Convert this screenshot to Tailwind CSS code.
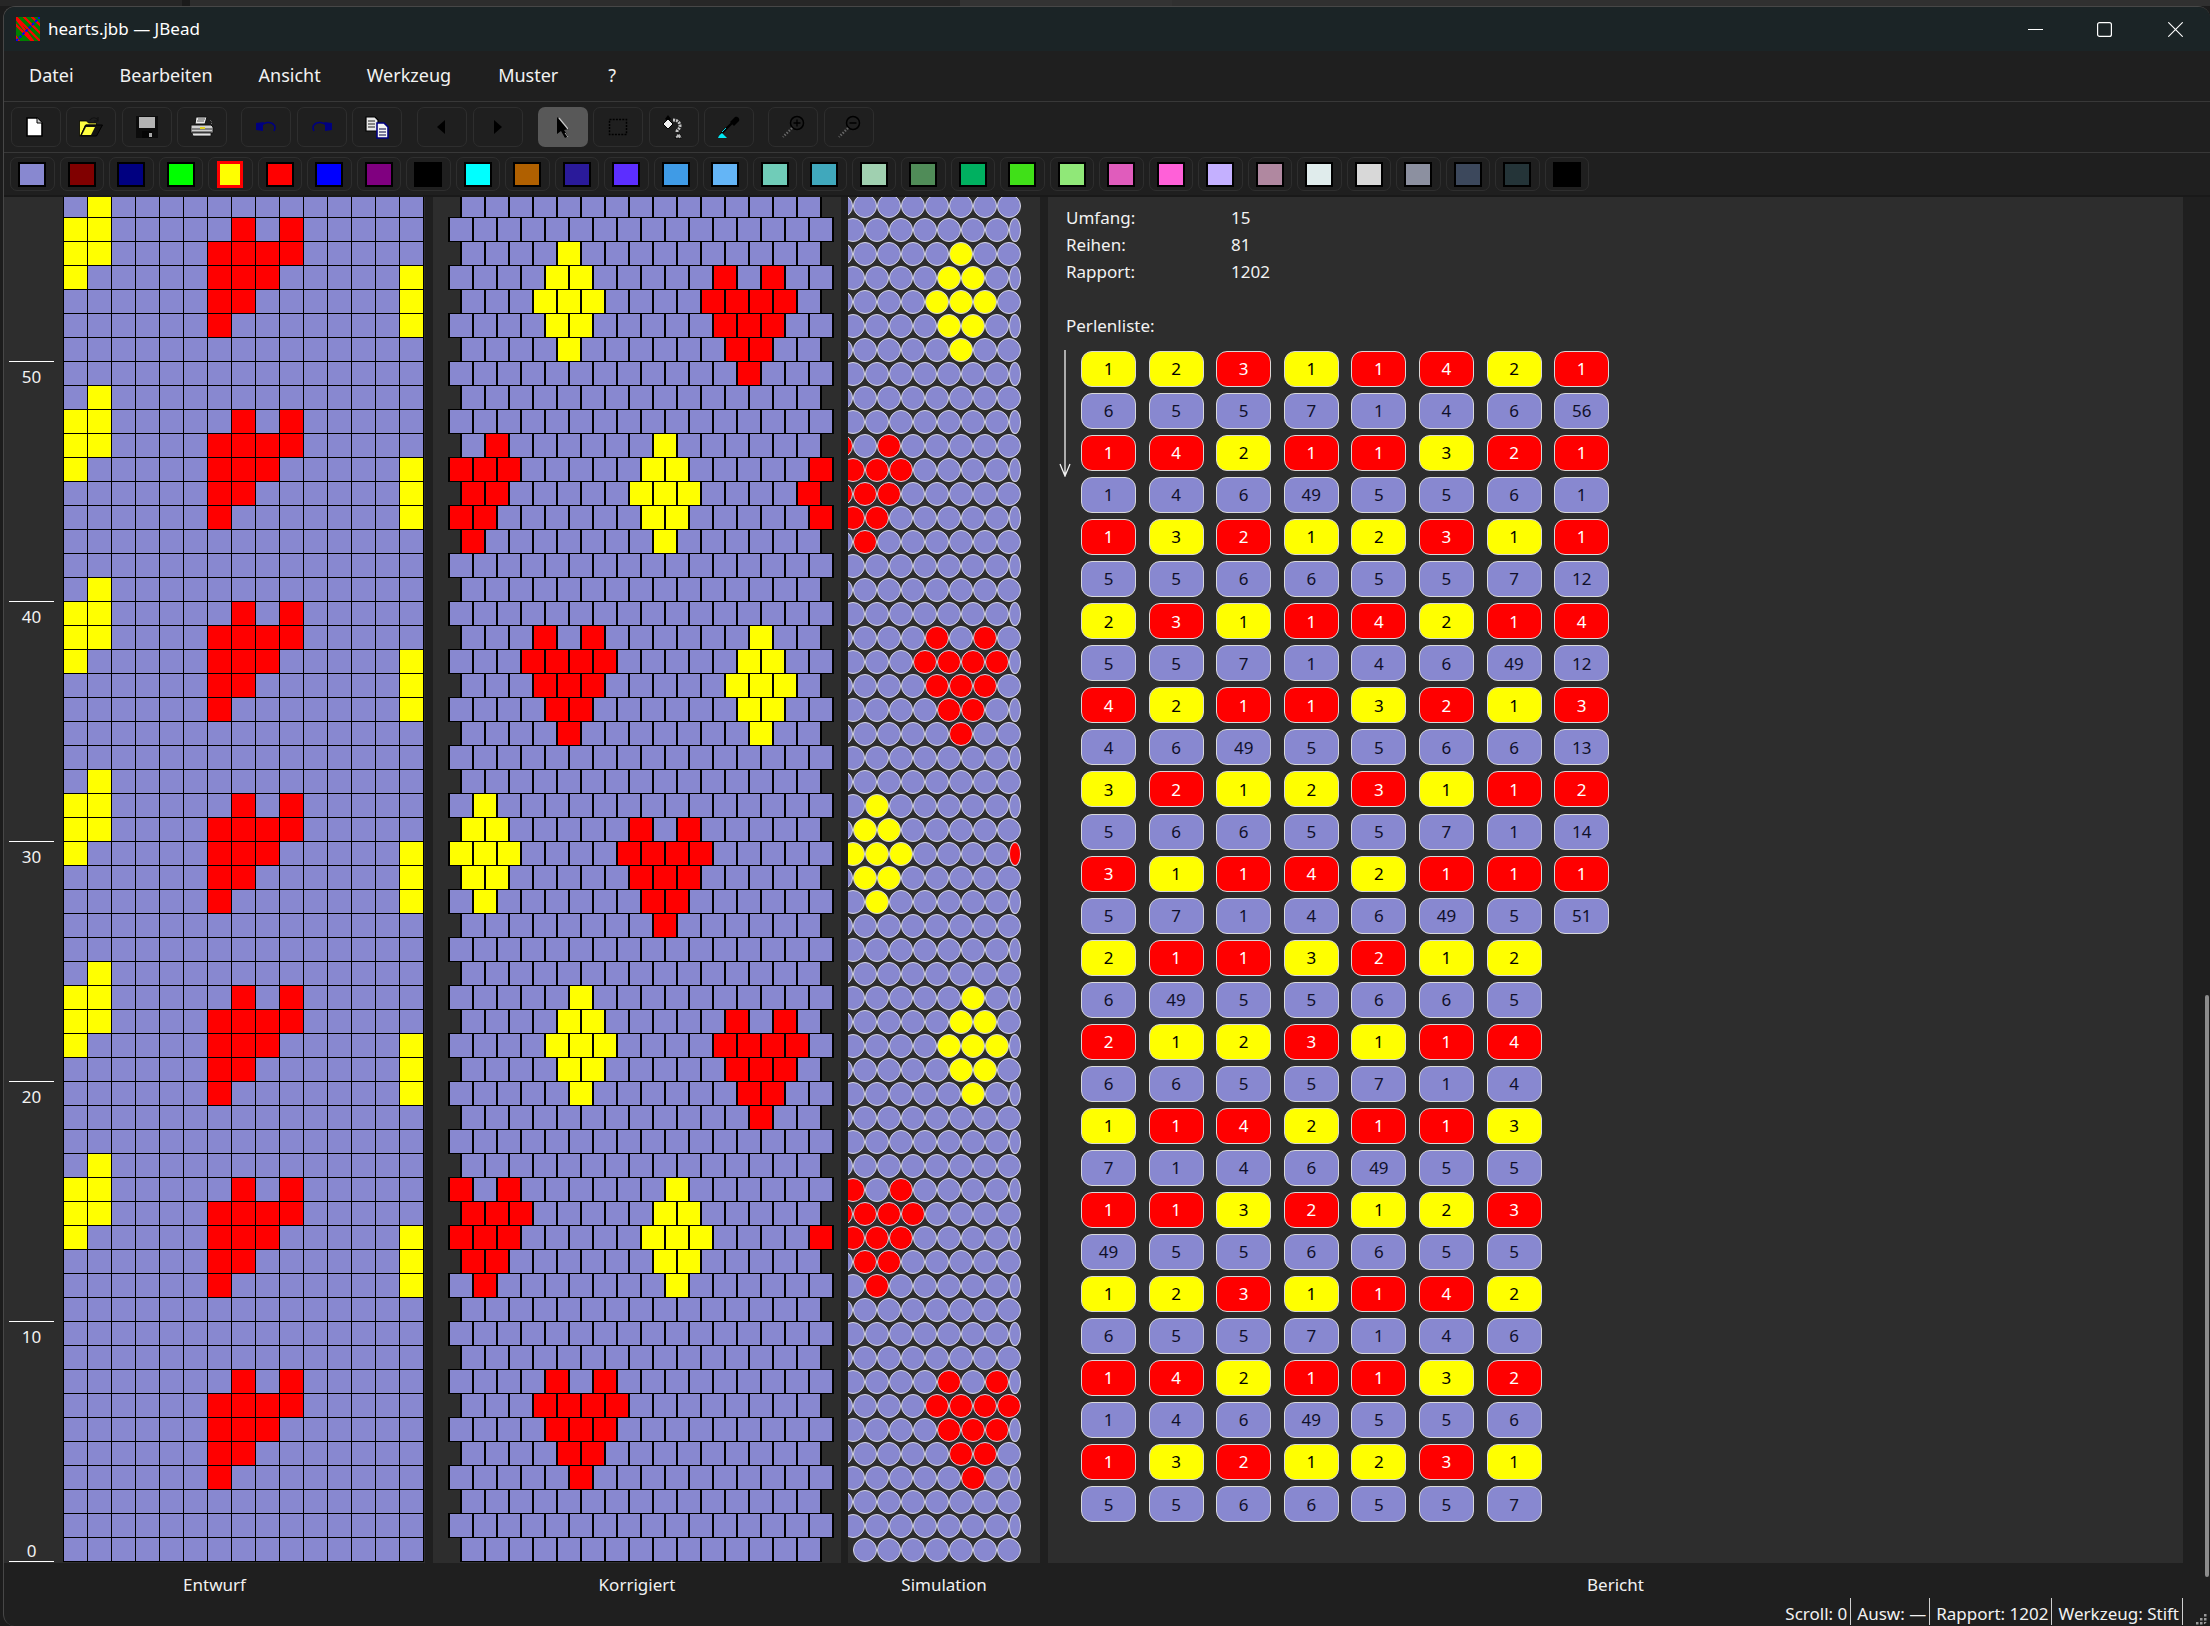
<!DOCTYPE html>
<html lang="de">
<head>
  <meta charset="UTF-8" />
  <title>hearts.jbb — JBead</title>
  <script src="https://cdn.jsdelivr.net/npm/@tailwindcss/browser@4"></script>
</head>
<body class="bg-[#1c1c1c] text-[#f2f2f2] font-['Noto_Sans','Open_Sans',sans-serif] text-[17px] overflow-hidden">
<div class="relative w-[2210px] h-[1626px] flex flex-col overflow-hidden">

  <!-- desktop behind the window -->
  <div class="flex h-[6px] shrink-0">
    <div class="w-[182px] bg-[#262626]"></div>
    <div class="w-[8px] bg-[#1b1b1b]"></div>
    <div class="w-[480px] bg-[#2d2d2d]"></div>
    <div class="w-[290px] bg-[#272727]"></div>
    <div class="w-[212px] bg-[#333333]"></div>
    <div class="flex-1 bg-[#303030]"></div>
  </div>

  <div class="flex-1 flex flex-col ml-[3px] bg-[#1f1f1f] rounded-[12px] border-t border-l border-[#474747] overflow-hidden">

    <!-- Titelleiste -->
    <div class="h-[44px] shrink-0 flex items-center bg-[#1b2426]">
      <svg class="ml-[12px] w-6 h-6" viewBox="0 0 24 24">
        <rect width="24" height="24" fill="#008000"/>
        <path d="M-8 8L8 32M0 0L24 24M8 -8L32 16M-4 -4L20 28M4 -4L28 20M-4 4L20 28" stroke="#ff0000" stroke-width="2.2" fill="none"/>
        <path d="M0 24L24 0" stroke="#0000ff" stroke-width="2" stroke-dasharray="3 1.5"/>
      </svg>
      <span class="ml-[8px] text-white">hearts.jbb — JBead</span>
      <div class="ml-auto flex items-center">
        <svg class="w-[15px] h-[15px] mr-[54px]" viewBox="0 0 15 15"><path d="M0 7.5H15" stroke="#fff" stroke-width="1"/></svg>
        <svg class="w-[15px] h-[15px] mr-[56px]" viewBox="0 0 15 15"><rect x="0.6" y="0.6" width="13.8" height="13.8" rx="2" fill="none" stroke="#fff" stroke-width="1.2"/></svg>
        <svg class="w-[15px] h-[15px] mr-[27px]" viewBox="0 0 15 15"><path d="M0.3 0.3L14.7 14.7M14.7 0.3L0.3 14.7" stroke="#fff" stroke-width="1.1"/></svg>
      </div>
    </div>

    <!-- Menue -->
    <div class="h-[51px] shrink-0 flex items-center pl-[25px] pb-[2px] gap-[46px] border-b border-[#383838] text-[18px]">
      <span>Datei</span><span>Bearbeiten</span><span>Ansicht</span><span>Werkzeug</span><span class="ml-px">Muster</span><span class="ml-[4px]">?</span>
    </div>

    <!-- Werkzeugleiste -->
    <div class="h-[51px] shrink-0 flex items-center pl-[6.5px] border-b border-[#383838]">
      <div class="flex gap-[5.5px]">
        <button class="w-[50px] h-10 rounded-[7px] border border-[#2e2e2e] flex items-center justify-center">
          <svg class="w-6 h-6 -ml-[2px]" viewBox="0 0 24 24"><path d="M4 3h10l5 5v13H4z" fill="#fff" stroke="#000" stroke-width="1.6"/><path d="M14 3v5h5" fill="#ccc" stroke="#000" stroke-width="1"/></svg>
        </button>
        <button class="w-[50px] h-10 rounded-[7px] border border-[#2e2e2e] flex items-center justify-center">
          <svg class="w-6 h-6" viewBox="0 0 24 24"><path d="M0.5 6h7l2 2h8v2H7L1.5 21h-1z" fill="#ffff40" stroke="#000" stroke-width="0.8"/><path d="M1.5 21l5-11h17l-6 11z" fill="#121212" stroke="#000"/><path d="M3 20l4-8h9l-4 8z" fill="#ffff40"/><path d="M11 5c2-3 6-3 8 0M19 2v4h-4" fill="none" stroke="#111" stroke-width="1.2"/></svg>
        </button>
        <button class="w-[50px] h-10 rounded-[7px] border border-[#2e2e2e] flex items-center justify-center">
          <svg class="w-6 h-6" viewBox="0 0 24 24"><rect x="1" y="1" width="22" height="22" fill="#0c0c0c"/><rect x="4" y="2" width="16" height="11" fill="#b4b4b4"/><rect x="7" y="16" width="10" height="7" fill="#050505"/><rect x="14" y="18" width="3" height="4" fill="#a8a8a8"/></svg>
        </button>
        <button class="w-[50px] h-10 rounded-[7px] border border-[#2e2e2e] flex items-center justify-center">
          <svg class="w-6 h-6" viewBox="0 0 24 24"><path d="M6 2h11l-2 7H5z" fill="#e8e8e8" stroke="#111"/><path d="M8 4h7M7 6h7" stroke="#333" stroke-width="0.8"/><path d="M1 10h20l2 2v6H1z" fill="#d0d0d0" stroke="#111"/><path d="M2 14h20M2 17h20" stroke="#333" stroke-width="1"/><rect x="10" y="12" width="5" height="2" fill="#e0d020"/><path d="M20 5l2 2-1 3" stroke="#777" stroke-dasharray="1 1" fill="none"/><path d="M2 18h19v3H3z" fill="#e4e4e4" stroke="#111" stroke-width="0.8"/></svg>
        </button>
      </div>
      <div class="flex gap-[5.5px] ml-[14px]">
        <button class="w-[50px] h-10 rounded-[7px] border border-[#2e2e2e] flex items-center justify-center">
          <svg class="w-6 h-6" viewBox="0 0 24 24"><path d="M2 8l8 -1-1 2 0 7-7-1z" fill="#000080"/><path d="M7 11c3-4 10-5 13-1 2 2 1 4 0 6" fill="none" stroke="#000080" stroke-width="1.6"/></svg>
        </button>
        <button class="w-[50px] h-10 rounded-[7px] border border-[#2e2e2e] flex items-center justify-center">
          <svg class="w-6 h-6" viewBox="0 0 24 24"><path d="M22 8l-8 -1 1 2 0 7 7-1z" fill="#000080"/><path d="M17 11c-3-4-10-5-13-1-2 2-1 4 0 6" fill="none" stroke="#000080" stroke-width="1.6"/></svg>
        </button>
        <button class="w-[50px] h-10 rounded-[7px] border border-[#2e2e2e] flex items-center justify-center">
          <svg class="w-6 h-6" viewBox="0 0 24 24"><path d="M1 2h9l3 3v11H1z" fill="#e8e8e8" stroke="#000" stroke-width="1.2"/><path d="M3 6h7M3 9h7M3 12h7" stroke="#222" stroke-width="1.1"/><path d="M12 8h7l4 4v11H12z" fill="#f4f4f4" stroke="#000080" stroke-width="1.6"/><path d="M14 14h7M14 17h7M14 20h7" stroke="#000040" stroke-width="1.1"/></svg>
        </button>
      </div>
      <div class="flex gap-[5.5px] ml-[15px]">
        <button class="w-[50px] h-10 rounded-[7px] border border-[#2e2e2e] flex items-center justify-center">
          <svg class="w-6 h-6 -ml-[2px]" viewBox="0 0 24 24"><path d="M16 5v14L8 12z" fill="#000"/></svg>
        </button>
        <button class="w-[50px] h-10 rounded-[7px] border border-[#2e2e2e] flex items-center justify-center">
          <svg class="w-6 h-6" viewBox="0 0 24 24"><path d="M8 5v14l8-7z" fill="#000"/></svg>
        </button>
      </div>
      <div class="flex gap-[5.5px] ml-[15px]">
        <button class="w-[50px] h-10 rounded-[7px] bg-[#585858] flex items-center justify-center">
          <svg class="w-6 h-6" viewBox="0 0 24 24"><path d="M6 2l0 17 4-3 4 7 3-2-4-6 5-1z" fill="#000"/><path d="M8 3l9 11" stroke="#c8c8c8" stroke-width="1.2"/><path d="M14 18l3 4" stroke="#aaa" stroke-width="1"/></svg>
        </button>
        <button class="w-[50px] h-10 rounded-[7px] border border-[#2e2e2e] flex items-center justify-center">
          <svg class="w-6 h-6" viewBox="0 0 24 24"><rect x="3.5" y="4.5" width="17" height="15" fill="none" stroke="#000" stroke-width="1.5" stroke-dasharray="2 1.2"/></svg>
        </button>
        <button class="w-[50px] h-10 rounded-[7px] border border-[#2e2e2e] flex items-center justify-center">
          <svg class="w-6 h-6" viewBox="0 0 24 24"><path d="M6 0l3 4-3 2-3-2z" fill="#000"/><path d="M1 9l5-5 5 5-5 5z" fill="#f0f0f0" stroke="#000" stroke-width="1"/><path d="M11 5c5 0 7 3 7 6s-3 3-3 6" fill="none" stroke="#c4c4c4" stroke-width="3" stroke-dasharray="2 1"/><path d="M13 23l2-4h3l2 4z" fill="#bdbdbd" stroke="#000" stroke-dasharray="1.5 1"/></svg>
        </button>
        <button class="w-[50px] h-10 rounded-[7px] border border-[#2e2e2e] flex items-center justify-center">
          <svg class="w-6 h-6" viewBox="0 0 24 24"><path d="M15 8L5 18l-1 3" stroke="#000" stroke-width="2.4" fill="none"/><path d="M13 7l4 4 5-5c1-2-1-5-4-4z" fill="#000"/><path d="M5 17l4-4" stroke="#00d8e8" stroke-width="1"/><path d="M1 23c1-3 3-4 4-5l3 3 2 2z" fill="#00e8f4"/></svg>
        </button>
      </div>
      <div class="flex gap-[5.5px] ml-[14px]">
        <button class="w-[50px] h-10 rounded-[7px] border border-[#2e2e2e] flex items-center justify-center">
          <svg class="w-6 h-6" viewBox="0 0 24 24"><circle cx="16" cy="8" r="6.5" fill="none" stroke="#000" stroke-width="1.5"/><path d="M12.5 8h7M16 4.5v7" stroke="#000" stroke-width="1.3"/><path d="M11 13L2 22" stroke="#666" stroke-width="2.4" stroke-dasharray="1.5 1.5"/></svg>
        </button>
        <button class="w-[50px] h-10 rounded-[7px] border border-[#2e2e2e] flex items-center justify-center">
          <svg class="w-6 h-6" viewBox="0 0 24 24"><circle cx="16" cy="8" r="6.5" fill="none" stroke="#000" stroke-width="1.5"/><path d="M12.5 8h7" stroke="#000" stroke-width="1.3"/><path d="M11 13L2 22" stroke="#666" stroke-width="2.4" stroke-dasharray="1.5 1.5"/></svg>
        </button>
      </div>
    </div>

    <!-- Farbpalette -->
    <div id="palette" class="h-[44px] shrink-0 flex items-start pt-[4px] pl-[6px] gap-[5px] border-b-2 border-[#191919]"></div>

    <!-- Ansichten -->
    <div class="h-[1366px] shrink-0 flex">
      <div id="draft" class="w-[421px] mr-[8px] flex flex-col justify-end overflow-hidden pb-px bg-[#2d2d2d]"></div>
      <div id="corrected" class="w-[408px] mr-[7px] flex flex-col justify-end overflow-hidden pb-px bg-[#2d2d2d]"></div>
      <div id="simulation" class="w-[192px] mr-[8px] flex flex-col justify-end overflow-hidden pb-px bg-[#2d2d2d]"></div>

      <!-- Bericht -->
      <div class="w-[1135px] bg-[#2d2d2d] pl-[18px] pt-[7px]">
        <div class="grid grid-cols-[165px_1fr] leading-[27px]">
          <span>Umfang:</span><span>15</span>
          <span>Reihen:</span><span>81</span>
          <span>Rapport:</span><span>1202</span>
        </div>
        <div class="mt-[27px] leading-[27px]">Perlenliste:</div>
        <div class="flex mt-[12px]">
          <svg class="w-3 h-[127px] -ml-[7px] -mt-px shrink-0" viewBox="0 0 12 127"><path d="M6 0V126M1 114l5 12 5-12" fill="none" stroke="#f2f2f2" stroke-width="1.3"/></svg>
          <div id="beads" class="ml-[10px] grid grid-cols-[repeat(8,55px)] auto-rows-[36px] gap-x-[12.6px] gap-y-[6.05px]"></div>
        </div>
      </div>
    </div>

    <!-- Beschriftung -->
    <div class="h-[35px] shrink-0 flex pt-[10px] leading-[24px]">
      <span class="w-[421px] mr-[8px] text-center">Entwurf</span>
      <span class="w-[408px] mr-[7px] text-center">Korrigiert</span>
      <span class="w-[192px] mr-[8px] text-center">Simulation</span>
      <span class="w-[1135px] text-center">Bericht</span>
    </div>

    <!-- Statusleiste -->
    <div class="h-[27px] shrink-0 flex items-stretch justify-end">
      <span class="flex items-center pt-[5px] pr-[3px] border-r border-[#d0d0d0]">Scroll: 0</span>
      <span class="flex items-center pt-[5px] pl-[6px] pr-[3px] border-r border-[#d0d0d0]">Ausw: —</span>
      <span class="flex items-center pt-[5px] pl-[6px] pr-[3px] border-r border-[#d0d0d0]">Rapport: 1202</span>
      <span class="flex items-center pt-[5px] pl-[6px] pr-[3px] border-r border-[#d0d0d0]">Werkzeug: Stift</span>
      <svg class="w-[27px] h-[27px] self-end" viewBox="0 0 27 27" fill="#9a9a9a">
        <rect x="21" y="16" width="2.5" height="2.5"/><rect x="17" y="20" width="2.5" height="2.5"/><rect x="21" y="20" width="2.5" height="2.5"/>
        <rect x="13" y="24" width="2.5" height="2.5"/><rect x="17" y="24" width="2.5" height="2.5"/><rect x="21" y="24" width="2.5" height="2.5"/>
      </svg>
    </div>
  </div>

  <!-- Scrollbalken -->
  <div class="absolute left-[2205px] top-[995px] w-[4px] h-[582px] bg-[#8c8c8c] rounded-sm"></div>
</div>

<script>
  const PAL = [
    'bg-[#8888d0]','bg-[#800000]','bg-[#000080]','bg-[#00ff00]','bg-[#ffff00]','bg-[#ff0000]','bg-[#0000ff]','bg-[#800080]',
    'bg-[#000000]','bg-[#00ffff]','bg-[#b06000]','bg-[#2a1a9a]','bg-[#5c2eff]','bg-[#3f9be6]','bg-[#64b5f6]','bg-[#70ccb8]',
    'bg-[#40a8bc]','bg-[#a0d0b0]','bg-[#508c58]','bg-[#00b060]','bg-[#40e018]','bg-[#90e878]','bg-[#e05cbc]','bg-[#ff60d8]',
    'bg-[#c4b0ff]','bg-[#b088a0]','bg-[#e0ecec]','bg-[#d8d8d8]','bg-[#8c90a0]','bg-[#3c485c]','bg-[#243438]','bg-[#000000]'
  ];
  const BG = { b: 'bg-[#8888d0]', y: 'bg-[#ffff00]', r: 'bg-[#ff0000]' };

  document.getElementById('palette').innerHTML = PAL.map((c, i) => {
    const frame = i === 4 ? 'border-[#ff0000] border-[3px] w-[26px] h-[27px]' : 'border-black border-2 w-[28px] h-[25px]';
    return `<button class="w-[44.5px] h-[34px] shrink-0 rounded-[7px] border border-[#2e2e2e] flex items-center justify-center"><span class="block ${frame} ${c}"></span></button>`;
  }).join('');

  // Entwurf: Muster wiederholt sich alle 8 Reihen
  function cell(i, j) {
    const m = i % 8;
    if (i >= 3) {
      if (m === 7 && (j === 7 || j === 9)) return 'r';
      if (m === 6 && j >= 6 && j <= 9) return 'r';
      if (m === 5 && j >= 6 && j <= 8) return 'r';
      if (m === 4 && (j === 6 || j === 7)) return 'r';
      if (m === 3 && j === 6) return 'r';
    }
    if (i >= 11 && j === 14 && m >= 3 && m <= 5) return 'y';
    if (i >= 13) {
      if (m === 0 && j === 1) return 'y';
      if ((m === 7 || m === 6) && j <= 1) return 'y';
      if (m === 5 && j === 0) return 'y';
    }
    return 'b';
  }
  const bead = idx => idx < 0 ? 'b' : cell(Math.floor(idx / 15), idx % 15);
  const start = r => r * 15 + Math.floor(r / 2);
  const ROWS = 57;

  let html = '';
  for (let i = ROWS - 1; i >= 0; i--) {
    const tick = i % 10 === 0;
    const label = i === 0 ? '0' : (i % 10 === 9 ? String(i + 1) : '');
    const pad = i === 0 ? 'pt-px' : 'pt-[3px]';
    const ruler = `<div class="w-[45px] h-6 text-center leading-6 ${pad} ${tick ? 'border-b border-white' : ''}">${label}</div>`;
    let cells = '';
    for (let j = 0; j < 15; j++) {
      cells += `<div class="w-6 h-6 border-r border-b border-black ${BG[cell(i, j)]}"></div>`;
    }
    html += `<div class="flex h-6 shrink-0 pl-[5px]">${ruler}<div class="flex ml-[9px] border-l border-black">${cells}</div></div>`;
  }
  document.getElementById('draft').innerHTML = html;

  html = '';
  for (let r = ROWS - 1; r >= 0; r--) {
    const long = r % 2 === 1;
    const n = long ? 16 : 15;
    let cells = '';
    for (let c = 0; c < n; c++) {
      cells += `<div class="w-6 h-6 border-r-2 border-b border-black ${BG[bead(start(r) + c)]}"></div>`;
    }
    html += long
      ? `<div class="flex shrink-0 h-[25px] pl-[15px] -mt-px"><div class="flex border-l-2 border-t border-black">${cells}</div></div>`
      : `<div class="flex shrink-0 h-6 pl-[27px]"><div class="flex border-l-2 border-black">${cells}</div></div>`;
  }
  document.getElementById('corrected').innerHTML = html;

  html = '';
  for (let r = ROWS - 1; r >= 0; r--) {
    const long = r % 2 === 1;
    let cells = '';
    for (let k = 0; k < 8; k++) {
      const idx = start(r) + (long ? k : k - 1);
      const hide = idx < 0 ? 'invisible' : '';
      const size = long && k === 7 ? 'w-3' : 'w-6';
      cells += `<div class="${size} h-6 shrink-0 rounded-[50%] border border-[#d6d6e4] ${BG[bead(idx)]} ${hide}"></div>`;
    }
    html += `<div class="flex h-6 shrink-0 ${long ? 'ml-[-7px]' : 'ml-[-19px]'}">${cells}</div>`;
  }
  document.getElementById('simulation').innerHTML = html;

  const LIST = `1y 2y 3r 1y 1r 4r 2y 1r|6 5 5 7 1 4 6 56|1r 4r 2y 1r 1r 3y 2r 1r|1 4 6 49 5 5 6 1|1r 3y 2r 1y 2y 3r 1y 1r|5 5 6 6 5 5 7 12|2y 3r 1y 1r 4r 2y 1r 4r|5 5 7 1 4 6 49 12|4r 2y 1r 1r 3y 2r 1y 3r|4 6 49 5 5 6 6 13|3y 2r 1y 2y 3r 1y 1r 2r|5 6 6 5 5 7 1 14|3r 1y 1r 4r 2y 1r 1r 1r|5 7 1 4 6 49 5 51|2y 1r 1r 3y 2r 1y 2y|6 49 5 5 6 6 5|2r 1y 2y 3r 1y 1r 4r|6 6 5 5 7 1 4|1y 1r 4r 2y 1r 1r 3y|7 1 4 6 49 5 5|1r 1r 3y 2r 1y 2y 3r|49 5 5 6 6 5 5|1y 2y 3r 1y 1r 4r 2y|6 5 5 7 1 4 6|1r 4r 2y 1r 1r 3y 2r|1 4 6 49 5 5 6|1r 3y 2r 1y 2y 3r 1y|5 5 6 6 5 5 7`;
  const CHIP = {
    b: 'bg-[#8888d0] text-[#10102a]',
    y: 'bg-[#ffff00] text-black',
    r: 'bg-[#ff0000] text-white'
  };
  html = '';
  LIST.split('|').forEach(line => {
    const items = line.split(' ');
    items.forEach(t => {
      const col = /[ry]$/.test(t) ? t.slice(-1) : 'b';
      html += `<div class="rounded-[11px] border border-[#d8d8d8] flex items-center justify-center ${CHIP[col]}">${parseInt(t)}</div>`;
    });
    if (items.length < 8) html += '<div></div>';
  });
  document.getElementById('beads').innerHTML = html;
</script>
</body>
</html>
